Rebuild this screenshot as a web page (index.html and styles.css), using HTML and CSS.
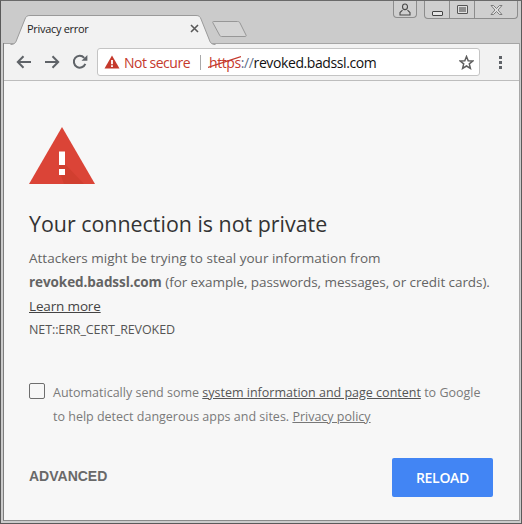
FILE: index.html
```html
<!DOCTYPE html>
<html lang="en">
<head>
<meta charset="utf-8">
<title>Privacy error</title>
<link rel="stylesheet" href="styles.css">
</head>
<body>
<div class="window">
  <div class="strip">
    <div class="tab">
      <svg class="tab-shape" width="206" height="30" viewBox="0 0 206 30"><path d="M0.5 29.5C5 29.5 6 27 7 24L15 4C16 1.5 17 0.5 20 0.5H186C189 0.5 190 1.5 191 4L199 24C200 27 201 29.5 205.500 29.500" fill="#f2f2f2" stroke="#9a9a9a"/></svg>
      <span class="tab-title">Privacy error</span>
      <svg class="tab-close" width="9" height="9" viewBox="0 0 9 9"><path d="M1 1L8 8M8 1L1 8" stroke="#5a5a5a" stroke-width="1.600"/></svg>
    </div>
    <svg class="newtab" width="36" height="18" viewBox="0 0 36 18"><path d="M1.500 1.500H25.500C27 1.500 27.500 2 28 3L34 15C34.500 16 34 16.500 33 16.500H9.500C8.500 16.500 8 16 7.500 15L1 3C0.500 2 0.500 1.500 1.500 1.500Z" fill="#d4d4d4" stroke="#979797"/></svg>
    <div class="caption">
      <div class="cap-btn cap-user">
        <svg width="12" height="13" viewBox="0 0 12 13"><path d="M6 1C4.300 1 3.500 2.200 3.500 3.800C3.500 5.400 4.300 6.600 6 6.600C7.700 6.600 8.500 5.400 8.500 3.800C8.500 2.200 7.700 1 6 1ZM3.500 7.200L1 9.500V12H11V9.500L8.500 7.200" fill="none" stroke="#4a4a4a" stroke-width="1.100"/></svg>
      </div>
      <div class="cap-group">
        <div class="cap-btn cap-min"><span class="glyph-min"></span></div>
        <div class="cap-btn cap-max"><span class="glyph-max"></span></div>
        <div class="cap-btn cap-close">
          <svg width="13" height="10" viewBox="0 0 13 10"><path d="M1 0.500H3.500L6.500 3.500L9.500 0.500H12L8 5L12 9.500H9.500L6.500 6.500L3.500 9.500H1L5 5Z" fill="#e2e2e2" stroke="#666" stroke-width="0.800"/></svg>
        </div>
      </div>
    </div>
  </div>
  <div class="body">
    <div class="toolbar">
      <svg class="tool" width="16" height="14" viewBox="0 0 16 14"><path d="M15 7H2M7.500 1.200L1.800 7L7.500 12.800" fill="none" stroke="#5f6368" stroke-width="2"/></svg>
      <svg class="tool" width="16" height="14" viewBox="0 0 16 14"><path d="M1 7H14M8.500 1.200L14.200 7L8.500 12.800" fill="none" stroke="#5f6368" stroke-width="2"/></svg>
      <svg class="tool" width="16" height="16" viewBox="0 0 16 16"><path d="M13.300 9.800A5.900 5.900 0 1 1 12.200 3.800" fill="none" stroke="#5f6368" stroke-width="2"/><path d="M9.500 6.800H15.400V0.900Z" fill="#5f6368"/></svg>
      <div class="omnibox">
        <svg class="warn-small" width="16" height="14" viewBox="0 0 16 14"><path d="M8 0.500L15.500 13.500H0.500Z" fill="#c5392c"/><path d="M7.100 5H8.900V9.300H7.100ZM7.100 10.300H8.900V12H7.100Z" fill="#fff"/></svg>
        <span class="not-secure">Not secure</span>
        <span class="omni-sep"></span>
        <span class="url"><span class="scheme">https<svg class="slash" width="33" height="14" viewBox="0 0 33 14"><path d="M0 12.500L33 1.500" stroke="#c5392c" stroke-width="1.200"/></svg></span><span class="sep-slashes">://</span>revoked.badssl.com</span>
        <svg class="star" width="15" height="15" viewBox="0 0 15 15"><path d="M7.500 1.500L9.200 5.700L13.800 6L10.300 8.900L11.400 13.400L7.500 11L3.600 13.400L4.700 8.900L1.200 6L5.800 5.700Z" fill="none" stroke="#5f5f5f" stroke-width="1.500"/></svg>
      </div>
      <div class="menu"><i></i><i></i><i></i></div>
    </div>
    <main class="page">
      <svg class="warn-big" width="66" height="57" viewBox="0 0 66 57"><path d="M33 0L66 57H0Z" fill="#db4437"/><path d="M30 26L36 26L36 37L55 57H35L30 43Z" fill="#c53929" opacity=".45"/><path d="M30 24.500H36V38H30ZM30 42H36V48H30Z" fill="#fff"/></svg>
      <h1>Your connection is not private</h1>
      <p class="lines"><span class="lead">Attackers might be trying to steal your information from</span><br><strong>revoked.badssl.com</strong> (for example, passwords, messages, or credit cards).</p>
      <p class="lines"><a class="learn" href="#">Learn more</a></p>
      <p class="code">NET::ERR_CERT_REVOKED</p>
      <div class="optin">
        <span class="check"></span>
        <p>Automatically send some <a class="dark" href="#">system information and page content</a> to Google<br>to help detect dangerous apps and sites. <a class="soft" href="#">Privacy policy</a></p>
      </div>
      <div class="actions">
        <span class="advanced">ADVANCED</span>
        <button class="reload" type="button">RELOAD</button>
      </div>
    </main>
  </div>
</div>
</body>
</html>
```
FILE: styles.css
```css
* { box-sizing: border-box; }
html, body { margin: 0; padding: 0; }
body { width: 522px; height: 524px; overflow: hidden; background: #fff; font-family: "Open Sans", sans-serif; }
.window {
  width: 522px; height: 524px; display: flex; flex-direction: column;
  background: #cbcbcb; border: 1px solid #5a5a5a; border-top-color: #6a6a6a;
  padding: 0 1px 2px 2px;
}
.strip { height: 42px; display: flex; align-items: flex-end; padding-left: 7px; flex: none; position: relative; }
.tab { width: 206px; height: 30px; position: relative; display: flex; align-items: center; padding: 0 17px 3px 17px; flex: none; margin-bottom: -2px; z-index: 1; }
.tab-shape { position: absolute; left: 0; top: 0; }
.tab-title { position: relative; font-size: 11px; color: #222; flex: 1; letter-spacing: -.3px; }
.tab-close { position: relative; }
.newtab { flex: none; margin: 0 0 5px -4px; }
.caption { position: absolute; right: 2px; top: 0; display: flex; gap: 7px; align-items: flex-start; }
.cap-btn { height: 17px; display: flex; align-items: center; justify-content: center; }
.cap-user { width: 24px; border: 1px solid #8c8c8c; border-top: 0; border-radius: 0 0 4px 4px; background: #cfcfcf; }
.cap-group { display: flex; border: 1px solid #8c8c8c; border-top: 0; border-radius: 0 0 4px 4px; background: #cfcfcf; }
.cap-min { width: 25px; border-right: 1px solid #8c8c8c; align-items: flex-end; padding-bottom: 2px; }
.cap-max { width: 25px; border-right: 1px solid #8c8c8c; }
.cap-close { width: 42px; border: 0; }
.glyph-min { width: 11px; height: 5px; border: 1px solid #444; border-radius: 1px; background: #e4e4e4; }
.glyph-max { width: 11px; height: 9px; border: 1px solid #555; border-radius: 1px; background: #8e8e8e; box-shadow: inset 0 0 0 1px #e0e0e0; }
.body { flex: 1; min-height: 0; display: flex; flex-direction: column; border-left: 1px solid #7d7d7d; border-right: 1px solid #a8a8a8; border-bottom: 1px solid #8a8a8a; }
.toolbar { height: 38px; flex: none; background: #f2f2f2; border-top: 1px solid #a5a5a5; border-bottom: 1px solid #bdbdbd; display: flex; align-items: center; gap: 12px; padding: 0 0 0 12px; }
.tool { flex: none; }
.omnibox { width: 383px; height: 28px; margin-left: -3px; background: #fff; border: 1px solid #c4c4c4; border-radius: 3px; display: flex; align-items: center; padding: 0 5px 0 6px; flex: none; }
.warn-small { flex: none; }
.not-secure { color: #c5392c; font-size: 14px; margin-left: 4px; letter-spacing: -.5px; }
.omni-sep { width: 1px; height: 15px; background: #a9a9a9; margin: 0 8px 0 10px; flex: none; }
.url { font-size: 14px; color: #111; flex: 1; white-space: nowrap; letter-spacing: -.4px; }
.scheme { color: #c5392c; position: relative; }
.slash { position: absolute; left: -1px; top: 2px; }
.sep-slashes { color: #5f6f8a; }
.star { flex: none; }
.menu { display: flex; flex-direction: column; gap: 2px; margin-left: -5px; padding-left: 12px; }
.menu i { display: block; width: 3px; height: 3px; background: #5f6368; }
.page { flex: 1; background: #f7f7f7; padding: 46px 25px 0 25px; color: #646464; font-size: 13.500px; min-height: 0; display: flex; flex-direction: column; }
.warn-big { display: block; flex: none; }
h1 { margin: 25px 0 0; font-size: 21.400px; font-weight: 400; color: #333; line-height: 30px; }
.lines { margin: 7px 0 0; line-height: 24px; letter-spacing: -.07px; white-space: nowrap; }
.lead { letter-spacing: 0; }
.lines + .lines { margin: 0; }
strong { font-weight: 700; }
.learn { color: #444; letter-spacing: -.15px; }
.code { margin: 2px 0 0; font-size: 12.500px; line-height: 20px; color: #555; letter-spacing: -.1px; }
.optin { display: flex; gap: 8px; margin-top: 43px; }
.check { width: 16px; height: 16px; border: 1px solid #6e6e6e; border-radius: 2px; flex: none; }
.optin p { margin: -2px 0 0; font-size: 12.500px; line-height: 24px; color: #7a7a7a; white-space: nowrap; }
.dark { color: #555; }
.soft { color: #777; }
.actions { display: flex; justify-content: space-between; align-items: center; margin-top: 29px; padding-right: 1px; }
.advanced { font-family: "Liberation Sans", sans-serif; font-weight: 700; font-size: 14px; color: #696969; padding-bottom: 4px; }
.reload { width: 101px; height: 39px; border: 0; border-radius: 2px; background: #4285f4; color: #fff; font-family: "Open Sans", sans-serif; font-weight: 600; font-size: 14px; letter-spacing: -.3px; padding: 0; }
```
